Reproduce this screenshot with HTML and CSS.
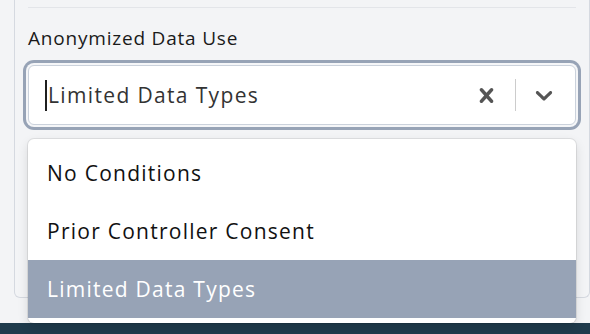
FILE: index.html
```html
<!DOCTYPE html>
<html lang="en">
<head>
<meta charset="utf-8">
<title>Anonymized Data Use</title>
<link rel="stylesheet" href="styles.css">
</head>
<body>
<div class="page">
  <section class="panel">
    <div class="rule"></div>
    <label class="field-label">Anonymized Data Use</label>
    <div class="select">
      <div class="control">
        <div class="value"><span class="caret"></span><span class="value-text">Limited Data Types</span></div>
        <div class="indicators">
          <span class="indicator clear">
            <svg viewBox="0 0 20 20" width="29" height="29" aria-hidden="true"><path fill="currentColor" d="M14.348 14.849c-0.469 0.469-1.229 0.469-1.697 0l-2.651-3.030-2.651 3.029c-0.469 0.469-1.229 0.469-1.697 0-0.469-0.469-0.469-1.229 0-1.697l2.758-3.15-2.759-3.152c-0.469-0.469-0.469-1.228 0-1.697s1.228-0.469 1.697 0l2.652 3.031 2.651-3.031c0.469-0.469 1.228-0.469 1.697 0s0.469 1.229 0 1.697l-2.758 3.152 2.758 3.15c0.469 0.469 0.469 1.229 0 1.698z"/></svg>
          </span>
          <span class="sep"></span>
          <span class="indicator dropdown">
            <svg viewBox="0 0 20 20" width="28" height="28" aria-hidden="true"><path fill="currentColor" d="M4.516 7.548c0.436-0.446 1.043-0.481 1.576 0l3.908 3.747 3.908-3.747c0.533-0.481 1.141-0.446 1.574 0 0.436 0.445 0.408 1.197 0 1.615-0.406 0.418-4.695 4.502-4.695 4.502-0.217 0.223-0.502 0.335-0.787 0.335s-0.57-0.112-0.789-0.335c0 0-4.287-4.084-4.695-4.502s-0.436-1.17 0-1.615z"/></svg>
          </span>
        </div>
      </div>
      <div class="menu">
        <div class="option">No Conditions</div>
        <div class="option">Prior Controller Consent</div>
        <div class="option selected">Limited Data Types</div>
      </div>
    </div>
  </section>
</div>
<div class="bottom-bar"></div>
</body>
</html>
```
FILE: styles.css
```css
html, body {
  margin: 0;
  height: 100%;
}
body {
  background: #f3f4f6;
  font-family: "Open Sans", "Liberation Sans", sans-serif;
  overflow: hidden;
}
.page {
  height: 323px;
}
.panel {
  margin-left: 14px;
  height: 298px;
  box-sizing: border-box;
  border: 1px solid #d5d9e0;
  border-top: none;
  border-radius: 0 0 6px 6px;
  padding: 7px 13px 0 13px;
}
.rule {
  height: 1px;
  background: #e3e5e9;
  margin-bottom: 18px;
}
.field-label {
  display: block;
  font-size: 19px;
  line-height: 24px;
  color: #1a1a1a;
  letter-spacing: 0.8px;
  margin-bottom: 15px;
}
.select {
  position: relative;
}
.control {
  display: flex;
  align-items: center;
  height: 60px;
  box-sizing: border-box;
  background: #fff;
  border: 1px solid #cbd2dc;
  border-radius: 6px;
  box-shadow: 0 0 0 2px #f5f6f8, 0 0 0 5px #97a3b6;
}
.value {
  flex: 1;
  display: flex;
  align-items: center;
  padding-left: 16px;
}
.caret {
  width: 2px;
  height: 31px;
  background: #1f1f1f;
  margin-right: 1px;
}
.value-text {
  font-size: 21px;
  color: #333;
  letter-spacing: 1.35px;
}
.indicators {
  display: flex;
  align-items: center;
  align-self: stretch;
}
.indicator {
  display: flex;
  color: #555555;
}
.indicator.clear {
  padding: 0 14px 0 13px;
}
.indicator.dropdown {
  padding: 0 17px 0 14px;
}
.sep {
  width: 1px;
  height: 32px;
  background: #cccccc;
}
.menu {
  position: absolute;
  top: 74px;
  left: 0;
  right: 0;
  z-index: 2;
  background: #fff;
  border-radius: 6px;
  padding: 5px 0;
  box-shadow: 0 0 0 1px rgba(0, 0, 0, 0.08), 0 4px 11px rgba(0, 0, 0, 0.12);
}
.option {
  height: 58px;
  display: flex;
  align-items: center;
  padding-left: 19px;
  font-size: 21px;
  color: #111;
  letter-spacing: 1.25px;
}
.option.selected {
  background: #97a3b6;
  color: #fff;
}
.bottom-bar {
  height: 11px;
  background: #1f3b4c;
}
```
